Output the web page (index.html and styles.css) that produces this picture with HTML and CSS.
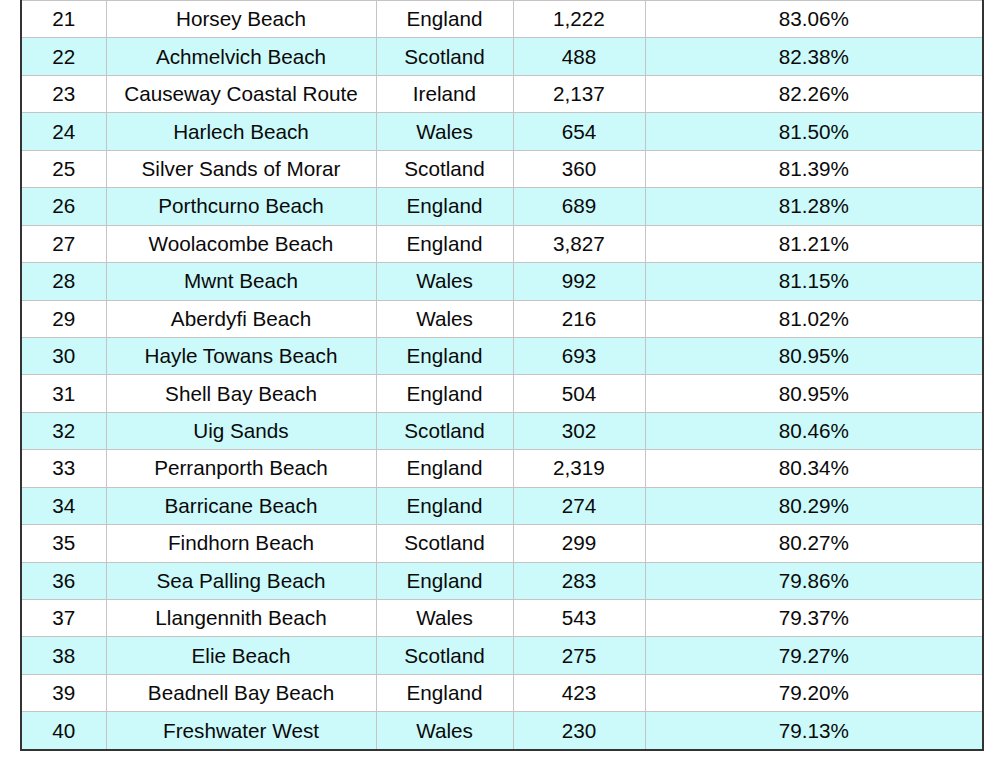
FILE: index.html
```html
<!DOCTYPE html>
<html>
<head>
<meta charset="utf-8">
<link rel="stylesheet" href="styles.css">
</head>
<body>
<table class="rank">
<colgroup><col class="c1"><col class="c2"><col class="c3"><col class="c4"><col class="c5"></colgroup>
<tbody>
<tr><td>21</td><td>Horsey Beach</td><td>England</td><td>1,222</td><td>83.06%</td></tr>
<tr><td>22</td><td>Achmelvich Beach</td><td>Scotland</td><td>488</td><td>82.38%</td></tr>
<tr><td>23</td><td>Causeway Coastal Route</td><td>Ireland</td><td>2,137</td><td>82.26%</td></tr>
<tr><td>24</td><td>Harlech Beach</td><td>Wales</td><td>654</td><td>81.50%</td></tr>
<tr><td>25</td><td>Silver Sands of Morar</td><td>Scotland</td><td>360</td><td>81.39%</td></tr>
<tr><td>26</td><td>Porthcurno Beach</td><td>England</td><td>689</td><td>81.28%</td></tr>
<tr><td>27</td><td>Woolacombe Beach</td><td>England</td><td>3,827</td><td>81.21%</td></tr>
<tr><td>28</td><td>Mwnt Beach</td><td>Wales</td><td>992</td><td>81.15%</td></tr>
<tr><td>29</td><td>Aberdyfi Beach</td><td>Wales</td><td>216</td><td>81.02%</td></tr>
<tr><td>30</td><td>Hayle Towans Beach</td><td>England</td><td>693</td><td>80.95%</td></tr>
<tr><td>31</td><td>Shell Bay Beach</td><td>England</td><td>504</td><td>80.95%</td></tr>
<tr><td>32</td><td>Uig Sands</td><td>Scotland</td><td>302</td><td>80.46%</td></tr>
<tr><td>33</td><td>Perranporth Beach</td><td>England</td><td>2,319</td><td>80.34%</td></tr>
<tr><td>34</td><td>Barricane Beach</td><td>England</td><td>274</td><td>80.29%</td></tr>
<tr><td>35</td><td>Findhorn Beach</td><td>Scotland</td><td>299</td><td>80.27%</td></tr>
<tr><td>36</td><td>Sea Palling Beach</td><td>England</td><td>283</td><td>79.86%</td></tr>
<tr><td>37</td><td>Llangennith Beach</td><td>Wales</td><td>543</td><td>79.37%</td></tr>
<tr><td>38</td><td>Elie Beach</td><td>Scotland</td><td>275</td><td>79.27%</td></tr>
<tr><td>39</td><td>Beadnell Bay Beach</td><td>England</td><td>423</td><td>79.20%</td></tr>
<tr><td>40</td><td>Freshwater West</td><td>Wales</td><td>230</td><td>79.13%</td></tr>
</tbody>
</table>
</body>
</html>
```
FILE: styles.css
```css
html, body {
  margin: 0;
  padding: 0;
  background: #ffffff;
}
body {
  font-family: "Liberation Sans", Arial, sans-serif;
  color: #0a0a0a;
}
.rank {
  margin-left: 20px;
  margin-top: 0;
  width: 964px;
  border-collapse: collapse;
  table-layout: fixed;
  border-left: 2px solid #333333;
  border-right: 2px solid #333333;
  border-bottom: 2px solid #333333;
}
.c1 { width: 85px; }
.c2 { width: 270px; }
.c3 { width: 137px; }
.c4 { width: 132px; }
.c5 { width: auto; }
.rank td {
  border: 1px solid #c4c4c4;
  height: 36.45px;
  padding: 0;
  text-align: center;
  vertical-align: middle;
  font-size: 20.7px;
  line-height: 22px;
}
.rank tr:nth-child(even) td {
  background: #ccfafa;
}
```
